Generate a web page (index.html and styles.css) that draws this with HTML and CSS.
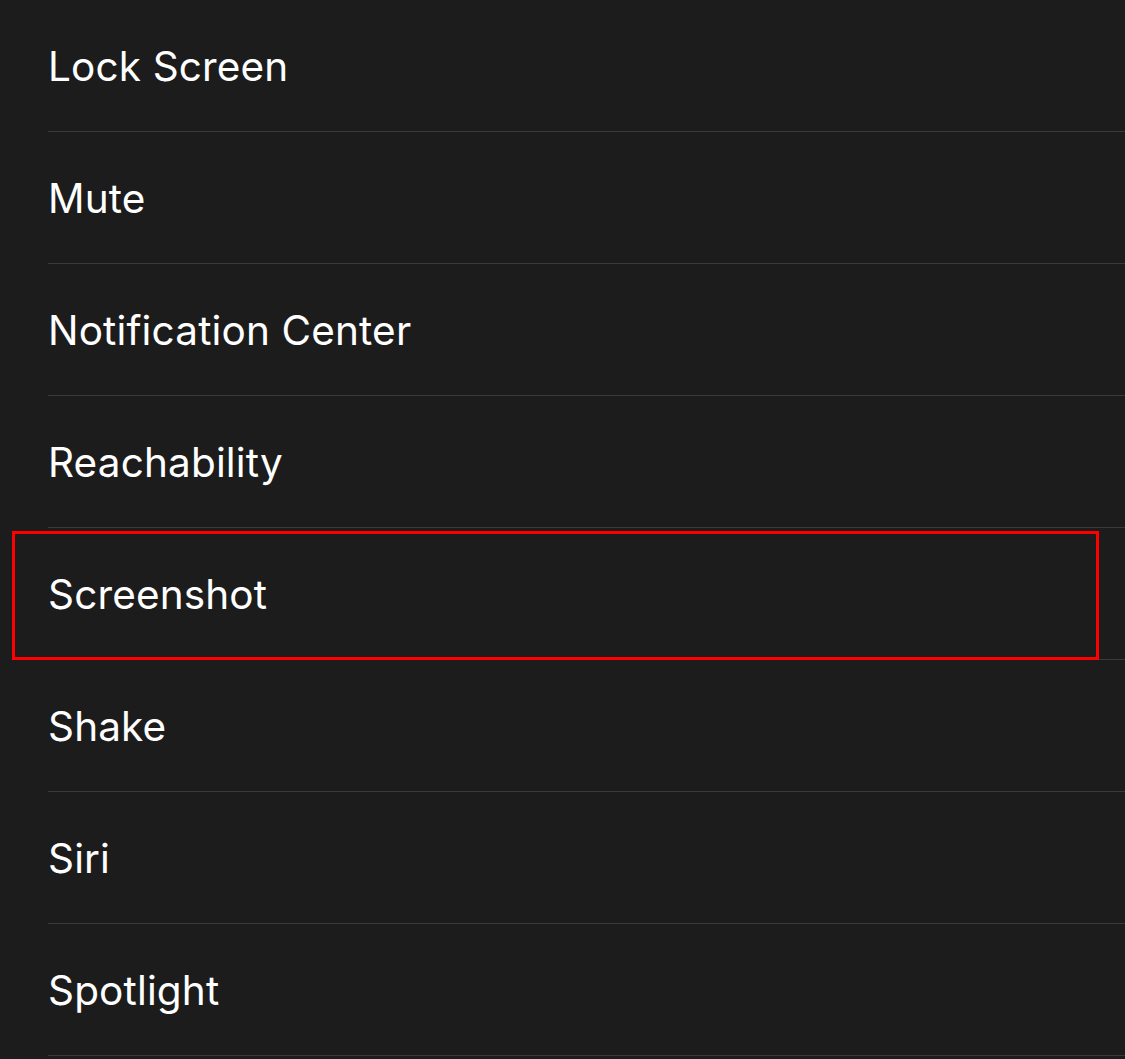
FILE: index.html
```html
<!DOCTYPE html>
<html>
<head>
<meta charset="utf-8">
<link rel="stylesheet" href="styles.css">
</head>
<body>
<div class="list">
  <div class="row"><div class="cell">Lock Screen</div></div>
  <div class="row"><div class="cell">Mute</div></div>
  <div class="row"><div class="cell">Notification Center</div></div>
  <div class="row"><div class="cell">Reachability</div></div>
  <div class="row highlighted"><div class="cell">Screenshot</div><div class="mark"></div></div>
  <div class="row"><div class="cell">Shake</div></div>
  <div class="row"><div class="cell">Siri</div></div>
  <div class="row"><div class="cell">Spotlight</div></div>
</div>
</body>
</html>
```
FILE: styles.css
```css
html, body {
  margin: 0;
  padding: 0;
  background: #1c1c1c;
  height: 100%;
  overflow: hidden;
}
body {
  font-family: Inter, "Noto Sans", sans-serif;
  color: #ffffff;
}
.list {
  display: flex;
  flex-direction: column;
}
.row {
  position: relative;
  padding-left: 48px;
}
.cell {
  box-sizing: border-box;
  height: 132px;
  padding-top: 2px;
  border-bottom: 1px solid #3a3a3c;
  display: flex;
  align-items: center;
  font-size: 40.5px;
  letter-spacing: 0.15px;
}
.mark {
  position: absolute;
  left: 12px;
  top: 3px;
  width: 1081px;
  height: 123px;
  border: 3px solid #ff0000;
}
```
